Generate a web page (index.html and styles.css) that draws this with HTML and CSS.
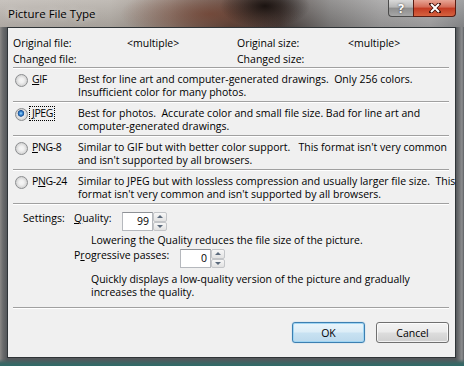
FILE: index.html
```html
<!DOCTYPE html>
<html>
<head>
    <meta charset="UTF-8">
    <title>Picture File Type</title>
    <link rel="stylesheet" href="styles.css">
</head>
<body>
    <!-- Dialog window: glass frame around the client area -->
    <div class="window">
        <div class="titlebar">
            <span class="title">Picture File Type</span>
            <div class="caption-buttons">
                <span class="caption-btn help">?</span>
                <span class="caption-btn close">
                    <svg width="12" height="10" viewBox="0 0 12 10"><path d="M2 1 L10 9 M10 1 L2 9" stroke="#3a0a04" stroke-width="3.6" stroke-linecap="square"/><path d="M2 1 L10 9 M10 1 L2 9" stroke="#fff" stroke-width="2"/></svg>
                </span>
            </div>
        </div>

        <div class="client">
            <!-- File info -->
            <div class="file-info">
                <span>Original file:</span><span>&lt;multiple&gt;</span>
                <span>Original size:</span><span>&lt;multiple&gt;</span>
                <span>Changed file:</span><span></span>
                <span>Changed size:</span><span></span>
            </div>
            <div class="separator"></div>

            <!-- Format choices -->
            <div class="format">
                <label class="option"><span class="radio"></span><span class="option-text"><u>G</u>IF</span></label>
                <p class="desc">Best for line art and computer-generated drawings.&nbsp; Only 256 colors.<br>Insufficient color for many photos.</p>
            </div>
            <div class="separator"></div>

            <div class="format">
                <label class="option"><span class="radio checked"></span><span class="option-text focused"><u>J</u>PEG</span></label>
                <p class="desc">Best for photos.&nbsp; Accurate color and small file size. Bad for line art and<br>computer-generated drawings.</p>
            </div>
            <div class="separator"></div>

            <div class="format">
                <label class="option"><span class="radio"></span><span class="option-text"><u>P</u>NG-8</span></label>
                <p class="desc">Similar to GIF but with better color support.&nbsp;&nbsp; This format isn't very common<br>and isn't supported by all browsers.</p>
            </div>
            <div class="separator"></div>

            <div class="format">
                <label class="option"><span class="radio"></span><span class="option-text">P<u>N</u>G-24</span></label>
                <p class="desc">Similar to JPEG but with lossless compression and usually larger file size.&nbsp; This<br>format isn't very common and isn't supported by all browsers.</p>
            </div>
            <div class="separator"></div>

            <!-- Settings -->
            <div class="settings">
                <span class="settings-label">Settings:</span>
                <div class="settings-body">
                    <div class="field-row">
                        <span class="field-label quality-label"><u>Q</u>uality:</span>
                        <div class="spinbox">
                            <span class="spin-value">99</span>
                            <div class="spin-buttons"><span class="spin up"></span><span class="spin down"></span></div>
                        </div>
                    </div>
                    <p class="hint">Lowering the Quality reduces the file size of the picture.</p>
                    <div class="field-row passes-row">
                        <span class="field-label passes-label">P<u>r</u>ogressive passes:</span>
                        <div class="spinbox">
                            <span class="spin-value">0</span>
                            <div class="spin-buttons"><span class="spin up"></span><span class="spin down"></span></div>
                        </div>
                    </div>
                    <p class="hint hint-last">Quickly displays a low-quality version of the picture and gradually<br>increases the quality.</p>
                </div>
            </div>
            <div class="separator bottom-sep"></div>

            <!-- Dialog buttons -->
            <div class="buttons">
                <button class="push-button default">OK</button>
                <button class="push-button">Cancel</button>
            </div>
        </div>
    </div>
</body>
</html>
```

FILE: styles.css
```css
/* General */
body {
    margin: 0;
    font-family: "Open Sans", "Noto Sans", sans-serif;
    font-size: 10.5px;
    color: #000;
}

/* Window frame */
.window {
    width: 464px;
    height: 366px;
    box-sizing: border-box;
    padding: 0 8px 8px 7px;
    display: flex;
    flex-direction: column;
    background:
        linear-gradient(to top, #2e6b68 0, #3d6564 3px, rgba(60,100,100,0) 7px),
        linear-gradient(to right, #8a8886 0, #6a6b6c 3px, #55585b 7px, #55585b 456px, #6f7173 459px, #8c8d8f 462px, #5c5f62 464px);
}

.titlebar {
    height: 27px;
    margin: 0 -8px 0 -7px;
    padding: 0 8px 0 8px;
    display: flex;
    align-items: center;
    background:
        radial-gradient(ellipse 45px 22px at 265px 6px, rgba(18,12,10,0.9) 0%, rgba(18,12,10,0) 100%),
        radial-gradient(ellipse 90px 28px at 210px 14px, rgba(115,62,44,0.7), rgba(115,62,44,0)),
        linear-gradient(to bottom, rgba(255,255,255,0.18), rgba(0,0,0,0.08)),
        linear-gradient(to right, #bcb6b0 0, #b3ada6 110px, #93867d 170px, #54453e 230px, #463c39 280px, #7d7b7a 330px, #9d9c9c 380px, #a6a5a6 430px, #8b8c8e 464px);
}

.title {
    font-size: 11.5px;
    white-space: nowrap;
    text-shadow: 0 0 6px rgba(255,255,255,0.7);
}

.caption-buttons {
    margin-left: auto;
    align-self: flex-start;
    display: flex;
}

.caption-btn {
    height: 16px;
    display: flex;
    align-items: center;
    justify-content: center;
    border: 1px solid #4a4a4a;
    border-top: none;
}

.help {
    width: 24px;
    border-right: none;
    border-radius: 0 0 0 4px;
    color: #fff;
    font-weight: bold;
    font-size: 12px;
    text-shadow: 0 0 2px #333;
    background: linear-gradient(to bottom, #d9d9d9 0, #b6b6b6 45%, #8d8d8d 50%, #a7a7a7 100%);
}

.close {
    width: 41px;
    border-color: #5a1c12;
    border-radius: 0 0 4px 0;
    background: linear-gradient(to bottom, #e7a595 0, #d36a55 45%, #c23a22 50%, #d6623f 100%);
}

/* Client area */
.client {
    flex: 1;
    background: #f0f0f0;
    border: 1px solid #2f3437;
    padding: 0 6px 0 5px;
    line-height: 13px;
    white-space: nowrap;
}

.file-info {
    display: grid;
    grid-template-columns: 114px 110px 111px 1fr;
    grid-auto-rows: 16px;
    line-height: 16px;
    padding-top: 7px;
}

.separator {
    border-top: 1px solid #a0a0a0;
    border-bottom: 1px solid #fff;
}

/* Format rows */
.format {
    display: flex;
    padding: 4px 0 2px;
}

.option {
    width: 65px;
    flex-shrink: 0;
    display: flex;
    align-items: flex-start;
}

.radio {
    width: 11px;
    height: 11px;
    flex-shrink: 0;
    margin: 1px 1px 0 2px;
    border: 1px solid #8b8d8f;
    border-radius: 50%;
    background: radial-gradient(circle at 50% 50%, #f6f6f6 0, #f0f0f0 30%, #d4d4d4 70%, #e6e6e6 100%);
}

.radio.checked {
    background:
        radial-gradient(circle at 45% 40%, #a6dcff 0, #3f8fd8 1.5px, #1c4f91 3px, rgba(28,79,145,0) 3.6px),
        radial-gradient(circle at 50% 50%, #f6f6f6 0, #f0f0f0 30%, #d4d4d4 70%, #e6e6e6 100%);
}

.option-text {
    padding: 0 1px 0 2px;
    margin-top: -1px;
    letter-spacing: -0.4px;
    white-space: nowrap;
    border: 1px dotted transparent;
}

.option-text.focused {
    border-color: #000;
}

.desc {
    margin: 0;
    white-space: nowrap;
}

/* Settings */
.settings {
    display: flex;
    padding-top: 7px;
}

.settings-label {
    width: 51px;
    flex-shrink: 0;
    padding-left: 10px;
}

.field-row {
    display: flex;
    align-items: flex-start;
}

.field-label {
    flex-shrink: 0;
}

.quality-label {
    width: 48px;
}

.passes-label {
    width: 106px;
}

.passes-row {
    margin-top: 2px;
}

.spinbox {
    display: flex;
    height: 19px;
}

.spin-value {
    width: 26px;
    padding-right: 3px;
    text-align: right;
    line-height: 17px;
    background: #fff;
    border: 1px solid #b5b8bd;
    border-top-color: #8e9196;
}

.spin-buttons {
    width: 14px;
    display: flex;
    flex-direction: column;
}

.spin {
    flex: 1;
    display: flex;
    align-items: center;
    justify-content: center;
    border: 1px solid #c3c5c8;
    border-radius: 2px;
    background: linear-gradient(to bottom, #f7f7f7, #e2e2e2);
}

.spin::after {
    content: "";
    border-left: 3px solid transparent;
    border-right: 3px solid transparent;
}

.spin.up::after {
    border-bottom: 3px solid #5b6a7c;
}

.spin.down::after {
    border-top: 3px solid #5b6a7c;
}

.hint {
    margin: 3px 0 0 17px;
    white-space: nowrap;
}

.hint-last {
    margin-top: 5px;
}

.bottom-sep {
    margin-top: 8px;
}

/* Buttons */
.buttons {
    display: flex;
    justify-content: flex-end;
    gap: 11px;
    margin-top: 13px;
}

.push-button {
    width: 73px;
    height: 21px;
    padding: 0;
    font-family: "Open Sans", "Noto Sans", sans-serif;
    font-size: 10.5px;
    color: #000;
    border: 1px solid #707070;
    border-radius: 3px;
    background: linear-gradient(to bottom, #f3f3f3 0, #ebebeb 48%, #dddddd 52%, #cfcfcf 100%);
    box-shadow: inset 0 0 0 1px rgba(255,255,255,0.7);
}

.push-button.default {
    border-color: #3c7fb1;
    background: linear-gradient(to bottom, #eaf5fb 0, #dcedf7 48%, #c8e2f2 52%, #bcd9ec 100%);
    box-shadow: inset 0 0 0 1px #9fd5f3, 0 0 1px #5aa8dc;
}
```
